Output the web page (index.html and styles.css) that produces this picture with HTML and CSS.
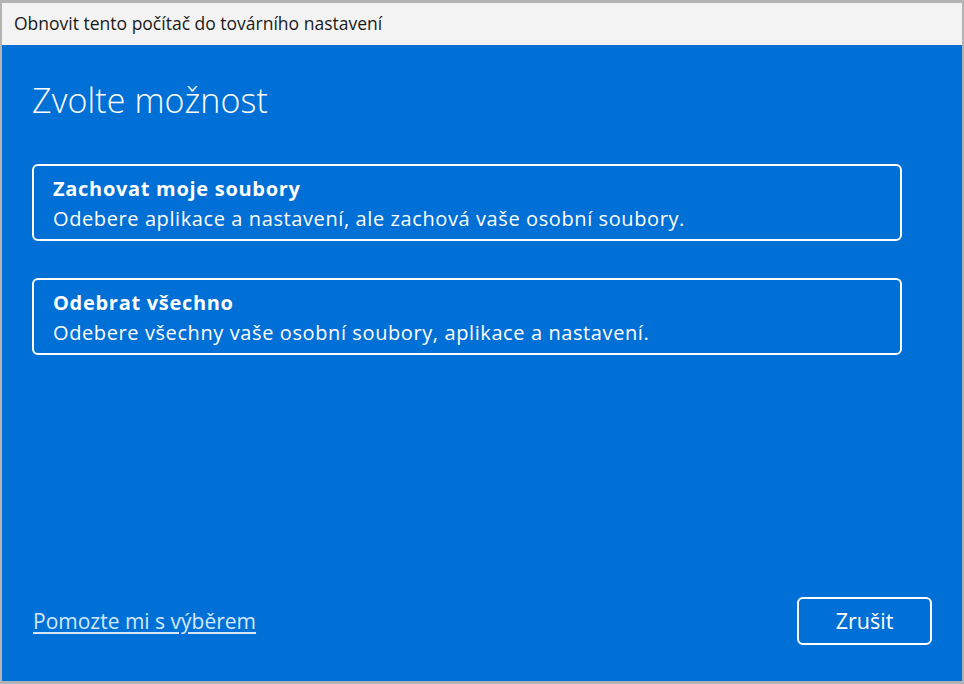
FILE: index.html
```html
<!DOCTYPE html>
<html lang="cs">
<head>
<meta charset="utf-8">
<title>Obnovit tento počítač</title>
<link rel="stylesheet" href="styles.css">
</head>
<body>
<div class="frame">
  <div class="window">
    <div class="titlebar">Obnovit tento počítač do továrního nastavení</div>
    <div class="content">
      <h1 class="heading">Zvolte možnost</h1>
      <div class="options">
        <div class="option">
          <div class="option-title">Zachovat moje soubory</div>
          <div class="option-desc">Odebere aplikace a nastavení, ale zachová vaše osobní soubory.</div>
        </div>
        <div class="option">
          <div class="option-title">Odebrat všechno</div>
          <div class="option-desc">Odebere všechny vaše osobní soubory, aplikace a nastavení.</div>
        </div>
      </div>
      <div class="footer">
        <a class="help" href="#">Pomozte mi s výběrem</a>
        <button class="cancel">Zrušit</button>
      </div>
    </div>
  </div>
</div>
</body>
</html>
```
FILE: styles.css
```css
html, body {
  margin: 0;
  padding: 0;
  width: 964px;
  height: 684px;
  overflow: hidden;
}
body {
  font-family: "Open Sans", "Noto Sans", sans-serif;
}
.frame {
  box-sizing: border-box;
  width: 964px;
  height: 684px;
  padding: 3px 2px 3px 2px;
  background: #b3b3b3;
}
.window {
  height: 100%;
  display: flex;
  flex-direction: column;
}
.titlebar {
  box-sizing: border-box;
  height: 42px;
  flex: none;
  background: #f3f3f3;
  color: #1a1a1a;
  font-size: 17.5px;
  padding: 0 0 3px 12px;
  display: flex;
  align-items: center;
}
.content {
  flex: 1;
  background: #0070d6;
  color: #fff;
  display: flex;
  flex-direction: column;
  padding: 0 30px 36px 30px;
}
.heading {
  margin: 32px 0 0 0;
  font-size: 34px;
  font-weight: 300;
  line-height: 46px;
  letter-spacing: 0.1px;
}
.options {
  margin-top: 41px;
  display: flex;
  flex-direction: column;
  gap: 37px;
  width: 870px;
}
.option {
  border: 2px solid #fff;
  border-radius: 6px;
  height: 77px;
  box-sizing: border-box;
  padding: 9px 19px 0 19px;
}
.option-title {
  font-weight: 700;
  font-size: 20px;
  line-height: 28px;
  letter-spacing: 0.7px;
}
.option-desc {
  margin-top: 2px;
  font-size: 20px;
  line-height: 28px;
  letter-spacing: 0.6px;
}
.footer {
  margin-top: auto;
  display: flex;
  justify-content: space-between;
  align-items: center;
}
.help {
  color: #d3e8ff;
  font-size: 21px;
  margin-left: 1px;
  text-decoration: underline;
  text-decoration-thickness: 1.5px;
  text-underline-offset: 3px;
}
.cancel {
  width: 135px;
  height: 48px;
  border: 2px solid #fff;
  border-radius: 6px;
  background: transparent;
  color: #fff;
  font-family: inherit;
  font-size: 21.5px;
  padding: 0 0 2px 0;
}
```
